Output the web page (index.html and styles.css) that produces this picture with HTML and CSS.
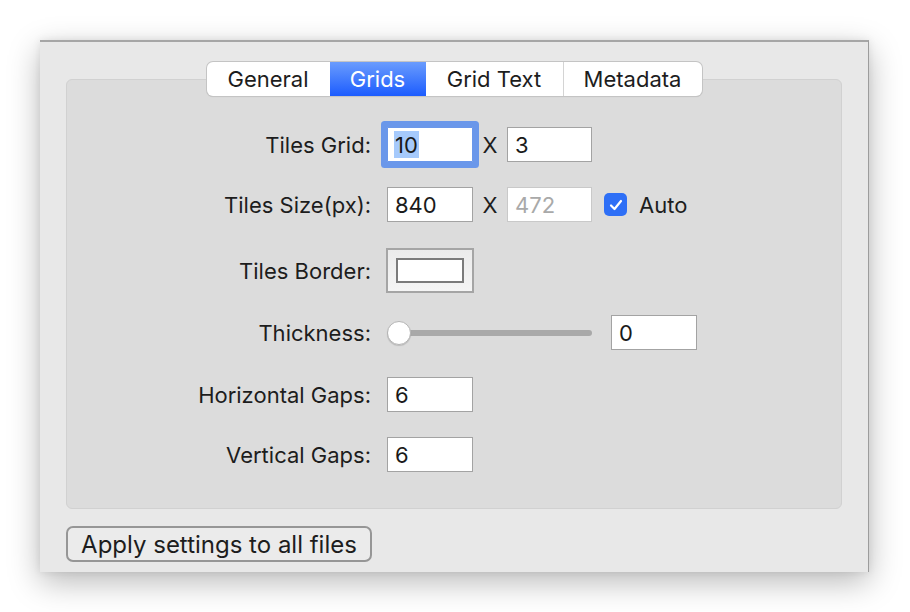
FILE: index.html
```html
<!DOCTYPE html>
<html>
<head>
<meta charset="utf-8">
<link rel="stylesheet" href="styles.css">
</head>
<body>
<div class="window">
  <div class="tabs">
    <div class="tab">General</div>
    <div class="tab active">Grids</div>
    <div class="tab">Grid Text</div>
    <div class="tab">Metadata</div>
  </div>
  <div class="group">
    <div class="row">
      <div class="label">Tiles Grid:</div>
      <div class="ctrl">
        <div class="field focused"><span class="sel">10</span></div>
        <span class="times">X</span>
        <div class="field narrow">3</div>
      </div>
    </div>

    <div class="row">
      <div class="label">Tiles Size(px):</div>
      <div class="ctrl">
        <div class="field">840</div>
        <span class="times">X</span>
        <div class="field narrow disabled">472</div>
        <span class="check">
          <svg width="14" height="12" viewBox="0 0 14 12"><path d="M2 6.5 L5.5 10 L12 2" fill="none" stroke="#fff" stroke-width="2.2" stroke-linecap="round" stroke-linejoin="round"/></svg>
        </span>
        <span class="check-label">Auto</span>
      </div>
    </div>

    <div class="row r3">
      <div class="label">Tiles Border:</div>
      <div class="ctrl">
        <div class="well"><div class="well-inner"></div></div>
      </div>
    </div>

    <div class="row r4">
      <div class="label">Thickness:</div>
      <div class="ctrl">
        <div class="slider"><div class="track"></div><div class="knob"></div></div>
        <div class="field">0</div>
      </div>
    </div>

    <div class="row r5">
      <div class="label">Horizontal Gaps:</div>
      <div class="ctrl"><div class="field">6</div></div>
    </div>

    <div class="row">
      <div class="label">Vertical Gaps:</div>
      <div class="ctrl"><div class="field">6</div></div>
    </div>
  </div>
  <div class="footer">
    <button class="btn">Apply settings to all files</button>
  </div>
</div>
</body>
</html>
```

FILE: styles.css
```css
* { box-sizing: border-box; }
html, body { margin: 0; padding: 0; background: #ffffff; }
body {
  font-family: Inter, "Helvetica Neue", Arial, sans-serif;
  color: #1d1d1d;
  padding: 40px 0 0 40px;
  width: 910px;
  height: 612px;
  overflow: hidden;
}
.window {
  width: 829px;
  height: 532px;
  background: #e8e8e8;
  border-top: 2px solid #a6a6a6;
  border-right: 1px solid #9c9c9c;
  box-shadow: 0 10px 30px rgba(0,0,0,0.28), 0 0 8px rgba(0,0,0,0.08);
  padding: 20px 26px 0 26px;
  display: flex;
  flex-direction: column;
}
.tabs {
  align-self: center;
  display: flex;
  height: 34px;
  background: #fff;
  border-radius: 6px;
  box-shadow: 0 0 0 1px #c4c4c4, 0 1px 1px rgba(0,0,0,0.15);
  position: relative;
  z-index: 1;
  overflow: hidden;
  font-size: 22px;
}
.tab {
  display: flex;
  align-items: center;
  justify-content: center;
  color: #1d1d1d;
  border-left: 1px solid #d4d4d4;
}
.tab:nth-child(1) { width: 123px; border-left: none; }
.tab:nth-child(2) { width: 96px; }
.tab:nth-child(3) { width: 137px; }
.tab:nth-child(4) { width: 139px; }
.tab.active {
  background: linear-gradient(#6a9cfd, #1c5cfe);
  color: #fff;
  border-left: none;
}
.tab.active + .tab { border-left: none; }
.group {
  margin-top: -17px;
  height: 430px;
  background: #dcdcdc;
  border: 1px solid #d1d1d1;
  border-radius: 6px;
  padding-top: 47px;
  display: flex;
  flex-direction: column;
}
.row {
  display: grid;
  grid-template-columns: 304px auto;
  column-gap: 16px;
  align-items: center;
  height: 35px;
}
.row + .row { margin-top: 25px; }
.row.r3 { margin-top: 26px; height: 45px; }
.row.r4 { margin-top: 22px; }
.row.r5 { margin-top: 27px; }
.label {
  justify-self: end;
  font-size: 22px;
  color: #1d1d1d;
}
.ctrl {
  display: flex;
  align-items: center;
}
.field {
  width: 86px;
  height: 35px;
  background: #fff;
  border: 1px solid #a3a3a3;
  font-size: 22px;
  padding-left: 7px;
  display: flex;
  align-items: center;
  color: #1a1a1a;
}
.field.narrow { width: 85px; }
.field.focused {
  border-color: #6a97ea;
  border-radius: 1px;
  box-shadow: 0 0 0 6px #6a97ea;
}
.field.disabled {
  color: #a9a9a9;
  border-color: #c9c9c9;
}
.sel {
  background: #a6cafc;
  display: inline-flex;
  align-items: center;
  height: 27px;
  padding: 0 1px;
  margin-left: -1px;
}
.times {
  width: 34px;
  text-align: center;
  font-size: 22px;
  color: #1d1d1d;
}
.check {
  width: 23px;
  height: 23px;
  margin-left: 12px;
  border-radius: 5px;
  background: #2e6ff6;
  display: flex;
  align-items: center;
  justify-content: center;
}
.check-label {
  margin-left: 12px;
  font-size: 22px;
}
.well {
  width: 88px;
  height: 45px;
  border: 2px solid #a5a5a5;
  background: linear-gradient(#ebebeb, #f5f5f5);
  padding: 8px;
  margin-left: -1px;
}
.well-inner {
  width: 68px;
  height: 25px;
  background: #fff;
  border: 2px solid #7b7b7b;
}
.slider {
  position: relative;
  width: 205px;
  height: 24px;
  margin-right: 19px;
}
.track {
  position: absolute;
  left: 0;
  right: 0;
  top: 9px;
  height: 6px;
  border-radius: 3px;
  background: #a9a9a9;
}
.knob {
  position: absolute;
  left: 0;
  top: 0;
  width: 24px;
  height: 24px;
  border-radius: 50%;
  background: #fff;
  border: 1px solid #b5b5b5;
  box-shadow: 0 1px 1px rgba(0,0,0,0.15);
}
.footer {
  margin-top: 17px;
}
.btn {
  font-family: Inter, "Helvetica Neue", Arial, sans-serif;
  width: 306px;
  height: 36px;
  border: 2px solid #969696;
  border-radius: 7px;
  background: #ebebeb;
  font-size: 24px;
  color: #1d1d1d;
  padding: 0;
  display: flex;
  align-items: center;
  justify-content: center;
}
```
